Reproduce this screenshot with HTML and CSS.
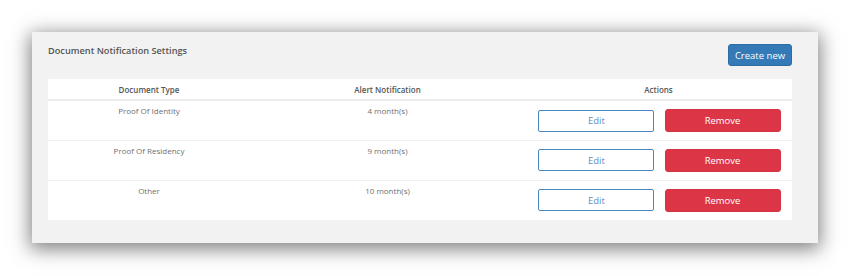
FILE: index.html
```html
<!DOCTYPE html>
<html lang="en">
<head>
  <meta charset="UTF-8">
  <title>Document Notification Settings</title>
  <link rel="stylesheet" href="styles.css">
</head>
<body>
  <div class="panel">
    <div class="panel-head">
      <h2 class="panel-title">Document Notification Settings</h2>
      <button class="btn btn-primary">Create new</button>
    </div>

    <table class="doc-table">
      <thead>
        <tr>
          <th class="col-type">Document Type</th>
          <th class="col-alert">Alert Notification</th>
          <th class="col-actions">Actions</th>
        </tr>
      </thead>
      <tbody>
        <tr>
          <td>Proof Of Identity</td>
          <td>4 month(s)</td>
          <td class="actions">
            <button class="btn btn-outline">Edit</button>
            <button class="btn btn-danger">Remove</button>
          </td>
        </tr>
        <tr>
          <td>Proof Of Residency</td>
          <td>9 month(s)</td>
          <td class="actions">
            <button class="btn btn-outline">Edit</button>
            <button class="btn btn-danger">Remove</button>
          </td>
        </tr>
        <tr>
          <td>Other</td>
          <td>10 month(s)</td>
          <td class="actions">
            <button class="btn btn-outline">Edit</button>
            <button class="btn btn-danger">Remove</button>
          </td>
        </tr>
      </tbody>
    </table>
  </div>
</body>
</html>
```

FILE: styles.css
```css
/* General */
body {
  margin: 0;
  padding: 32px 0 33px 32px;
  background-color: #ffffff;
  font-family: "Open Sans", Arial, sans-serif;
}

/* Panel */
.panel {
  width: 786px;
  height: 211px;
  box-sizing: border-box;
  padding: 12px 26px 0 16px;
  background-color: #f2f2f2;
  box-shadow: 0px 4px 18px 2px rgba(0, 0, 0, 0.5);
}

.panel-head {
  display: flex;
  justify-content: space-between;
  align-items: flex-start;
  height: 35px;
}

.panel-title {
  margin: 0;
  font-size: 9.2px;
  font-weight: 600;
  color: #555;
  line-height: 14px;
}

/* Buttons */
.btn {
  font-family: "Open Sans", Arial, sans-serif;
  font-size: 9.5px;
  border-radius: 3px;
  cursor: pointer;
  box-sizing: border-box;
}

.btn-primary {
  width: 64px;
  height: 22px;
  padding: 0;
  background-color: #337ab7;
  border: 1px solid #2e6da4;
  color: #ffffff;
}

.btn-outline {
  width: 116px;
  height: 22px;
  margin-left: 2px;
  background-color: #ffffff;
  border: 1px solid #4a86c0;
  color: #5b8fc4;
  border-radius: 2px;
}

.btn-danger {
  width: 116px;
  height: 23px;
  margin-left: 8px;
  background-color: #dc3545;
  border: 1px solid #d43343;
  color: #ffffff;
}

/* Table */
.doc-table {
  width: 744px;
  border-collapse: collapse;
  background-color: #ffffff;
  font-size: 8px;
  color: #707070;
}

.doc-table th {
  height: 20px;
  padding: 0;
  font-weight: 600;
  color: #555;
  border-bottom: 2px solid #ececec;
}

.col-type { width: 202px; }
.col-alert { width: 275px; }

.doc-table td {
  height: 40px;
  padding: 4px 0 0;
  text-align: center;
  vertical-align: top;
  border-top: 1px solid #f0f0f0;
  box-sizing: border-box;
}

.doc-table tbody tr:first-child td {
  border-top: none;
}

.doc-table td.actions {
  padding-top: 8px;
  white-space: nowrap;
}
```
